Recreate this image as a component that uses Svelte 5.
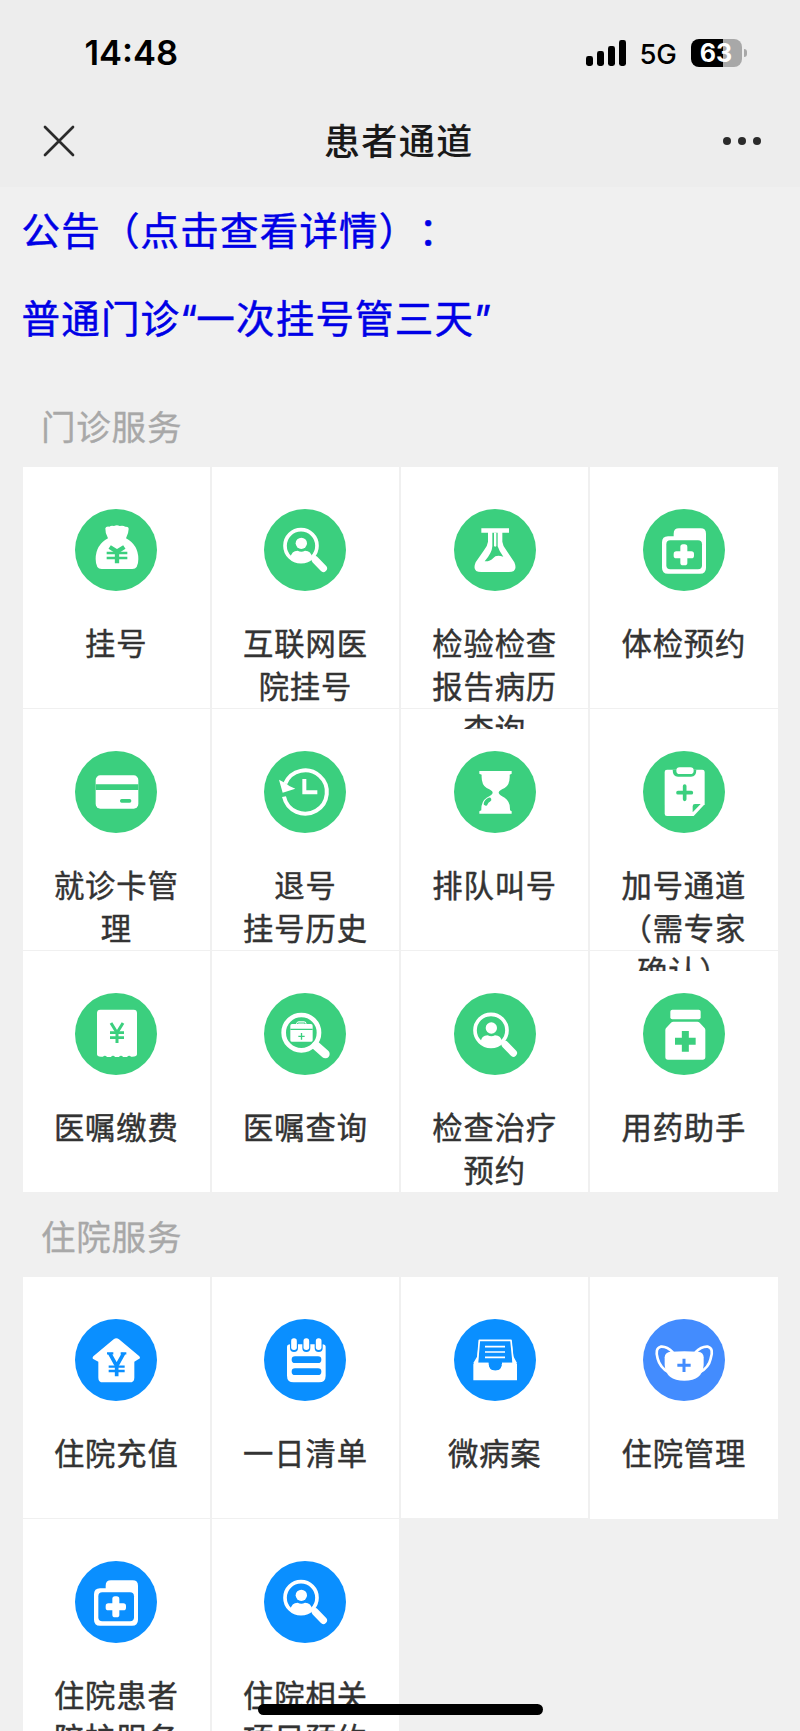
<script>
  const GREEN = '#3bcf7e';
  const BLUE = '#0a8fff';

  const sections = [
    {
      title: '门诊服务',
      items: [
        { icon: 'bag', label: '挂号' },
        { icon: 'person', label: '互联网医\n院挂号' },
        { icon: 'flask', label: '检验检查\n报告病历\n查询' },
        { icon: 'folder', label: '体检预约' },
        { icon: 'card', label: '就诊卡管\n理' },
        { icon: 'history', label: '退号\n挂号历史' },
        { icon: 'hourglass', label: '排队叫号' },
        { icon: 'clipboard', label: '加号通道\n（需专家\n确认）' },
        { icon: 'receipt', label: '医嘱缴费' },
        { icon: 'case', label: '医嘱查询' },
        { icon: 'person', label: '检查治疗\n预约', dy: 2 },
        { icon: 'bottle', label: '用药助手' }
      ].map((i) => ({ color: GREEN, ...i }))
    },
    {
      title: '住院服务',
      items: [
        { icon: 'house', label: '住院充值' },
        { icon: 'notepad', label: '一日清单' },
        { icon: 'tray', label: '微病案' },
        { icon: 'mask', label: '住院管理', color: '#438cfe', tall: true },
        { icon: 'folder', label: '住院患者\n陪护服务' },
        { icon: 'person', label: '住院相关\n项目预约' }
      ].map((i) => ({ color: BLUE, ...i }))
    }
  ];
</script>

{#snippet glyph(name, c)}
  {#if name === 'bag'}
    <path fill="#fff" d="M99 88 Q90 72 91 58 Q93 51 103 53 Q109 48 117 51 Q126 47 134 51 Q144 48 151 53 Q161 52 161 60 Q161 72 153 88 Q190 108 190 150 Q190 180 172 180 H80 Q62 180 62 150 Q62 108 99 88Z" />
    <path stroke={c} stroke-width="13" d="M104 114L126 128L148 114M126 124V163" />
    <path stroke={c} stroke-width="8" d="M95 132H157M95 147H157" />
  {:else if name === 'person'}
    <circle cx="111" cy="110" r="48" stroke="#fff" stroke-width="11" />
    <circle cx="112" cy="103" r="17" fill="#fff" />
    <path fill="#fff" d="M80 145 Q82 126 101 125 Q112 131 123 125 Q142 126 144 145 Q112 172 80 145Z" />
    <path stroke="#fff" stroke-width="13" d="M143 142L158 156" />
    <path stroke="#fff" stroke-width="22" stroke-linecap="round" d="M154 153L178 178" />
  {:else if name === 'flask'}
    <path fill="#fff" d="M82 58H165V71H145V98Q147 113 157 124L181 160Q193 189 164 189H82Q53 189 65 160L90 124Q100 112 102 98V71H82Z" />
    <path fill={c} d="M115 71H120V112Q123 92 121 71H131V112Q136 128 148 143Q126 136 118 147Q108 158 92 157Q114 132 115 112Z" />
    <path fill="#fff" d="M120 71H127V111Q124 116 120 111Z" />
  {:else if name === 'folder'}
    <path fill="#fff" d="M92 82V74Q92 58 108 58H173Q189 58 189 74V176Q189 194 171 194H75Q57 194 57 176V100Q57 82 75 82Z" />
    <rect x="70" y="94" width="107" height="87" rx="12" fill={c} />
    <rect x="92" y="127" width="61" height="21" rx="8" fill="#fff" />
    <rect x="112" y="106" width="21" height="63" rx="8" fill="#fff" />
  {:else if name === 'card'}
    <rect x="62" y="73" width="128" height="100" rx="14" fill="#fff" />
    <path fill={c} d="M62 100H190V117H62Z" />
    <rect x="135" y="144" width="34" height="11" rx="5" fill={c} />
  {:else if name === 'history'}
    <path stroke="#fff" stroke-width="12" d="M60 137A65 65 0 1 0 64 97" />
    <path fill="#fff" d="M45 86L65 97L76 105L94 113L56 125Z" />
    <path stroke="#fff" stroke-width="12" d="M121 84V124H160" />
  {:else if name === 'hourglass'}
    <path fill="#fff" d="M76 60H173V68L167 71Q169 100 152 111Q134 119 134 125Q134 131 152 140Q169 151 168 178L173 181V188H76V181L82 178Q81 151 98 140Q116 131 116 125Q116 119 98 111Q81 100 83 71L76 68Z" />
    <path stroke={c} stroke-width="12" stroke-linecap="round" d="M95 158Q97 150 106 146" />
  {:else if name === 'clipboard'}
    <path fill="#fff" d="M72 56H178Q185 56 185 63V160L152 195H72Q65 195 65 188V63Q65 56 72 56Z" />
    <path fill={c} d="M89 56H160Q160 77 144 77H105Q89 77 89 56ZM149 166Q149 159 156 159H173L149 184Z" />
    <rect x="100" y="49" width="52" height="20" rx="10" fill="#fff" />
    <path stroke={c} stroke-width="11" stroke-linecap="round" d="M105 125H145M125 105V145" />
  {:else if name === 'receipt'}
    <path fill="#fff" d="M76 50H176Q186 50 186 60V184Q186 192 168 191A7 7 0 0 0 156 192H144A7 7 0 0 0 132 192H120A7 7 0 0 0 108 192H96A7 7 0 0 0 84 191Q66 193 66 184V60Q66 50 76 50Z" />
    <path stroke={c} stroke-width="9" d="M108 90L126 119L144 90M126 117V150" />
    <path stroke={c} stroke-width="8" d="M105 119H147M105 134H147" />
  {:else if name === 'case'}
    <circle cx="112" cy="119" r="53" stroke="#fff" stroke-width="14" />
    <path stroke="#fff" stroke-width="26" stroke-linecap="round" d="M156 158L184 183" />
    <path fill="#fff" d="M84 93H96Q98 85 104 85H120Q127 85 128 93H141Q146 93 146 98V142Q146 146 142 146H83Q79 146 79 142V98Q79 93 84 93Z" />
    <path stroke={c} stroke-width="4" d="M79 109H146M103 130H122M112.5 120V140" />
    <path stroke={c} stroke-width="3" d="M101 93V90H123V93" />
  {:else if name === 'bottle'}
    <rect x="82" y="50" width="91" height="29" rx="6" fill="#fff" />
    <path fill="#fff" d="M91 86H163Q167 86 170 89L184 104Q187 107 187 111V192Q187 200 179 200H75Q67 200 67 192V111Q67 107 70 104L84 89Q87 86 91 86Z" />
    <path stroke={c} stroke-width="21" d="M96 145H158M127 114V176" />
  {:else if name === 'house'}
    <path fill="#fff" d="M116 61Q124 54 132 61L193 112Q198 118 190 121L178 128V176Q178 190 164 190H84Q70 190 70 176V128L56 121Q50 118 55 112Z" />
    <path stroke={c} stroke-width="11" d="M104 103L125 141L146 103M125 138V172" />
    <path stroke={c} stroke-width="7" d="M96 103H115M137 103H154M101 143H149M101 156H149" />
  {:else if name === 'notepad'}
    <path fill="#fff" d="M69 84Q69 76 79 76H175Q185 76 185 84V170Q185 190 165 190H89Q69 190 69 170Z" />
    {#each [90, 127, 164] as x}
      <rect x={x - 12} y="56" width="24" height="43" rx="12" fill={c} />
      <rect x={x - 8.5} y="58" width="17" height="35" rx="8" fill="#fff" />
    {/each}
    <rect x="83" y="112" width="89" height="20" rx="10" fill={c} />
    <rect x="83" y="148" width="89" height="20" rx="10" fill={c} />
  {:else if name === 'tray'}
    <path stroke="#fff" stroke-width="5" stroke-linejoin="round" d="M76 64H171L178 134H70Z" />
    <path fill="#fff" d="M75 62L72 132H58L70 112ZM172 62L176 132H189L178 112Z" />
    <path fill="#fff" d="M60 131H104Q104 154 124 154Q144 154 144 131H187L189 136V184H58V136Z" />
    <path fill={c} d="M104 128H144V135H143Q141 154 124 154Q106 154 104 135Z" />
    <path stroke="#fff" stroke-width="5" d="M93 83H153M93 99H153M93 115H153" />
  {:else if name === 'mask'}
    <path fill="#fff" d="M84 98Q123 95 165 98Q182 100 182 115V137Q179 185 124 185Q68 185 65 137V115Q65 100 84 98Z" />
    <path stroke="#fff" stroke-width="8" d="M90 100Q71 81 53 83Q35 88 44 119Q51 146 77 160M157 100Q176 81 195 83Q213 88 203 119Q197 146 170 160" />
    <path stroke={c} stroke-width="9" d="M103 139H143M123 119V159" />
  {/if}
{/snippet}

<div class="screen">
  <header>
    <div class="status">
      <span class="time">14:48</span>
      <div class="indicators">
        <svg class="signal" width="41" height="26" viewBox="0 0 41 26">
          <rect x="0" y="16" width="7" height="10" rx="2.4" />
          <rect x="11" y="11" width="7" height="15" rx="2.4" />
          <rect x="22" y="6" width="7" height="20" rx="2.4" />
          <rect x="33" y="0" width="7" height="26" rx="2.4" />
        </svg>
        <span class="network">5G</span>
        <span class="battery">63</span>
        <span class="cap"></span>
      </div>
    </div>
    <nav>
      <svg width="32" height="32" viewBox="0 0 32 32">
        <path d="M2 2L30 30M30 2L2 30" stroke="#2b2b2b" stroke-width="2.7" stroke-linecap="round" />
      </svg>
      <h1>患者通道</h1>
      <svg width="40" height="10" viewBox="0 0 40 10" fill="#2b2b2b">
        <circle cx="5" cy="5" r="4" /><circle cx="20" cy="5" r="4" /><circle cx="35" cy="5" r="4" />
      </svg>
    </nav>
  </header>

  <main>
    <div class="notice">
      <p>公告（点击查看详情）：</p>
      <p>普通门诊<q>“</q>一次挂号管三天<q>”</q></p>
    </div>
    {#each sections as section}
      <h2>{section.title}</h2>
      <div class="grid">
        {#each section.items as item}
          <div class="cell" class:tall={item.tall}>
            <svg class="icon" width="82" height="82" viewBox="0 0 246 246" fill="none">
              <circle cx="123" cy="123" r="123" fill={item.color} />
              <g transform="translate(0 {item.dy ?? 0})">{@render glyph(item.icon, item.color)}</g>
            </svg>
            <div class="label">{item.label}</div>
          </div>
        {/each}
      </div>
    {/each}
  </main>
  <div class="home"></div>
</div>

<style>
  :global(body) { background: #f0f0f0; overflow: hidden; }
  .screen {
    position: relative;
    width: 800px;
    height: 1731px;
    overflow: hidden;
    background: #f0f0f0;
    font-family: 'Noto Sans CJK SC', sans-serif;
    text-spacing-trim: space-all;
  }
  h1, h2, p { margin: 0; font-weight: 400; }
  header { height: 186.5px; background: #ededed; box-sizing: border-box; padding-top: 32px; }
  .status { display: flex; justify-content: space-between; align-items: center; height: 42px; padding: 0 53.5px 0 84.5px; font-family: Inter, sans-serif; }
  .time { font-size: 34.5px; font-weight: 600; line-height: 42px; letter-spacing: 0; }
  .indicators { display: flex; align-items: center; }
  .network { font-size: 27.5px; font-weight: 500; margin: 2px 14px 0 12.5px; letter-spacing: -0.3px; line-height: 40px; }
  .battery {
    width: 51px; height: 28px; border-radius: 8px; color: #fff;
    background: linear-gradient(90deg, #000 32px, #a8a8a8 32px);
    font-size: 25px; font-weight: 700; line-height: 28px; text-align: center;
  }
  .cap { width: 3px; height: 8px; margin-left: 2px; border-radius: 0 4px 4px 0; background: #a8a8a8; }
  nav { display: flex; justify-content: space-between; align-items: center; height: 54px; margin-top: 39.5px; padding: 0 38.5px 0 43px; }
  nav svg:last-child { margin-right: -1px; }
  h1 { height: 56px; font-size: 36px; letter-spacing: 1.4px; font-weight: 500; color: #191919; line-height: 53px; }
  main { padding: 0 22.5px; }
  .notice { height: 195.2px; color: #0000e6; font-size: 38.5px; letter-spacing: 1.2px; line-height: 82px; -webkit-text-stroke: 0.5px; }
  .notice p { height: 88.3px; margin-left: -1px; white-space: nowrap; }
  q { quotes: none; font-family: Inter, sans-serif; letter-spacing: -1px; }
  q::before, q::after { content: none; }
  h2 { height: 80.6px; padding: 5px 0 0 18.5px; font-size: 34.5px; letter-spacing: 0.8px; line-height: 76px; color: #a8a8a8; -webkit-text-stroke: 0.3px; }
  .grid { display: grid; grid-template-columns: repeat(4, 187.6px); grid-auto-rows: 240.4px; gap: 1.6px; }
  .cell { background: #fff; display: flex; flex-direction: column; align-items: center; }
  .tall { margin-bottom: -1.6px; }
  .icon { flex: none; margin-top: 41.4px; }
  .label {
    flex: none; height: 108px; margin-top: 30px; overflow: hidden; white-space: pre; text-align: center;
    font-size: 30.3px; letter-spacing: 0.9px; line-height: 43.2px; color: #333; -webkit-text-stroke: 0.45px;
    position: relative; z-index: 1;
  }
  .home { position: absolute; z-index: 2; left: 257.5px; top: 1704px; width: 285.5px; height: 10.5px; border-radius: 6px; background: #000; }
</style>
